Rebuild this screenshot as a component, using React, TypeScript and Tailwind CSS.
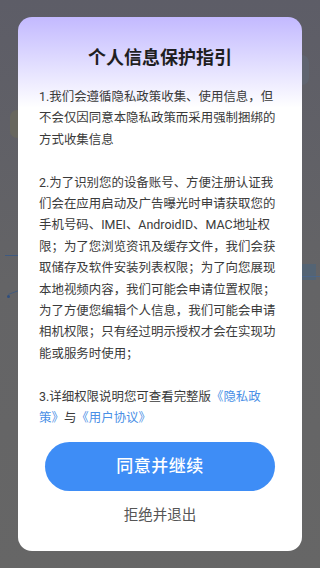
import React from "react";

export default function App() {
  return (
    <div
      className="relative w-[320px] h-[568px] overflow-hidden bg-gradient-to-b from-[#5d5d67] via-[#646466] to-[#666666] flex flex-col items-center pt-[17px]"
      style={{ fontFamily: 'Roboto, "Noto Sans CJK SC", sans-serif' }}
    >
      {/* faint background content under the dim overlay */}
      <div className="absolute left-[10px] top-[110px] w-[14px] h-[28px] rounded-full bg-[#68675f]" />
      <div className="absolute left-[295px] top-[55px] w-[14px] h-[30px] rounded-full bg-[#5f6470]" />
      <div className="absolute left-[5px] top-[255px] w-[14px] h-[1px] bg-[#3f5a80]" />
      <div className="absolute left-[7px] top-[295px] w-[3px] h-[3px] rounded-full bg-[#2f4f7f]" />
      <div className="absolute left-[8px] top-[292px] w-[11px] h-[1px] bg-[#3f5a80] -rotate-[20deg]" />
      <div className="absolute left-[302px] top-[264px] w-[14px] h-[16px] bg-[#546474]" />
      <div className="absolute left-[302px] top-[276px] w-[18px] h-[1px] bg-[#4d6688]" />

      <div className="relative w-[284px] h-[534px] rounded-[14px] bg-gradient-to-b from-[#c3b9ff] via-white via-[17%] to-white flex flex-col">
        <h1 className="mt-[29px] text-center text-[18px] leading-[24px] font-bold text-[#1f1f1f]">
          个人信息保护指引
        </h1>
        <div className="mt-[16px] pl-[21px] pr-[18px] text-[12.45px] leading-[21.4px] text-[#3a3a3a] flex flex-col gap-[21.4px]">
          <p>1.我们会遵循隐私政策收集、使用信息，但不会仅因同意本隐私政策而采用强制捆绑的方式收集信息</p>
          <p>
            2.为了识别您的设备账号、方便注册认证我们会在应用启动及广告曝光时申请获取您的手机号码、IMEI、AndroidID、MAC地址权限；为了您浏览资讯及缓存文件，我们会获取储存及软件安装列表权限；为了向您展现本地视频内容，我们可能会申请位置权限；为了方便您编辑个人信息，我们可能会申请相机权限；只有经过明示授权才会在实现功能或服务时使用；
          </p>
          <p>
            3.详细权限说明您可查看完整版<span className="text-[#4a8fe6]">《隐私政<br />策》</span>与<span className="text-[#4a8fe6]">《用户协议》</span>
          </p>
        </div>
        <div className="mt-auto mb-[24px] flex flex-col items-center">
          <button className="w-[230px] h-[49px] rounded-full bg-[#3e8df6] text-white text-[17px] font-medium tracking-[0.5px]">
            同意并继续
          </button>
          <div className="mt-[14px] text-[14.5px] leading-[22px] text-[#555555]">拒绝并退出</div>
        </div>
      </div>
    </div>
  );
}
